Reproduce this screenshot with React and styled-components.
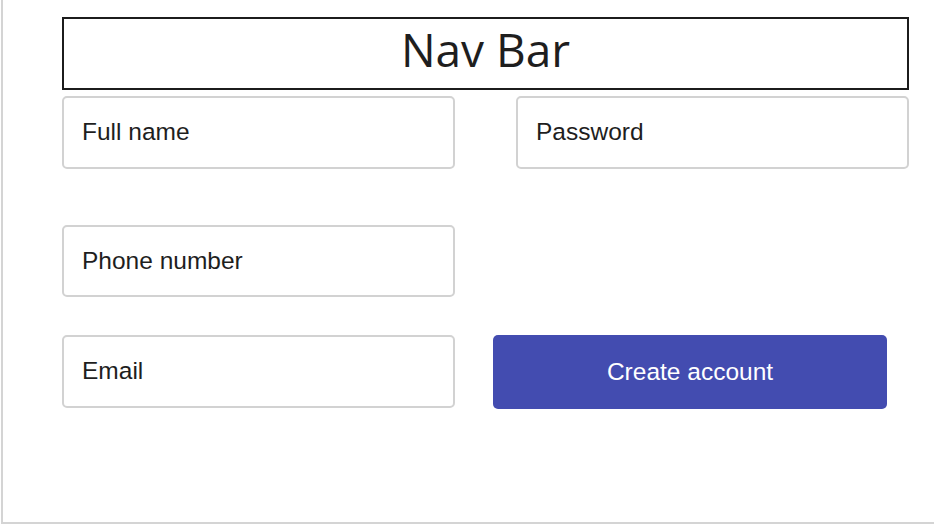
import React from "react";
import styled, { createGlobalStyle } from "styled-components";

const Global = createGlobalStyle`
  html, body { margin: 0; padding: 0; background: #fff; }
  * { box-sizing: border-box; }
`;

const Frame = styled.div`
  margin-left: 1px;
  width: 933px;
  height: 524px;
  border-left: 2px solid #d4d4d4;
  border-bottom: 2px solid #d4d4d4;
  padding: 17px 0 0 59px;
`;

const NavBar = styled.header`
  width: 847px;
  height: 73px;
  border: 2px solid #1c1c1c;
  display: flex;
  align-items: center;
  justify-content: center;
  padding-bottom: 10px;
  font-family: "Open Sans", sans-serif;
  font-size: 46px;
  line-height: 1;
  color: #1e1e1e;
`;

const Form = styled.form`
  display: flex;
  flex-direction: column;
  width: 847px;
`;

const Row = styled.div`
  display: grid;
  grid-template-columns: 431px 416px;
  margin-top: ${(p) => p.$top}px;
`;

const Field = styled.input`
  width: 393px;
  height: ${(p) => p.$h || 73}px;
  border: 2px solid #d2d2d2;
  border-radius: 5px;
  padding: 0 0 1px 18px;
  font-family: "Liberation Sans", Arial, sans-serif;
  font-size: 24.5px;
  color: #1e1e1e;
  outline: none;
  background: #fff;
  justify-self: ${(p) => (p.$end ? "end" : "start")};
  &::placeholder { color: #1e1e1e; opacity: 1; }
`;

const Button = styled.button`
  width: 394px;
  height: 74px;
  border: none;
  border-radius: 5px;
  background: #434cb0;
  color: #fff;
  font-family: "Liberation Sans", Arial, sans-serif;
  font-size: 24.5px;
  cursor: pointer;
`;

export default function App() {
  return (
    <>
      <Global />
      <Frame>
        <NavBar>Nav Bar</NavBar>
        <Form onSubmit={(e) => e.preventDefault()}>
          <Row $top={6}>
            <Field placeholder="Full name" />
            <Field placeholder="Password" type="password" $end />
          </Row>
          <Row $top={56}>
            <Field placeholder="Phone number" $h={72} />
          </Row>
          <Row $top={38}>
            <Field placeholder="Email" />
            <Button type="submit">Create account</Button>
          </Row>
        </Form>
      </Frame>
    </>
  );
}
